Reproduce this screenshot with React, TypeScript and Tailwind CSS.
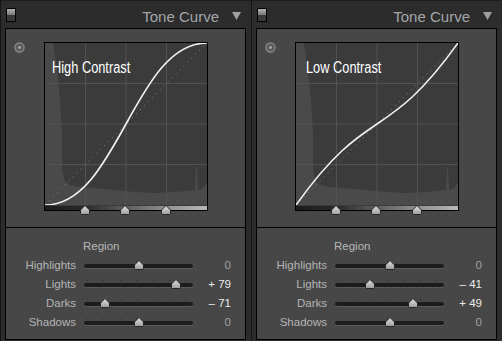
import React from "react";

type PanelProps = {
  label: string;
  labelLeft: number;
  curve: string;
  values: number[];
};

const Thumb = () => (
  <svg width="10" height="10" viewBox="0 0 10 10">
    <defs>
      <linearGradient id="tg" x1="0" y1="0" x2="0" y2="1">
        <stop offset="0" stopColor="#e2e2e2" />
        <stop offset="1" stopColor="#9c9c9c" />
      </linearGradient>
    </defs>
    <path d="M5 0.5 L9.5 5 L9.5 8.3 Q9.5 9.5 8.3 9.5 L1.7 9.5 Q0.5 9.5 0.5 8.3 L0.5 5 Z" fill="url(#tg)" stroke="#262626" strokeWidth="1" />
  </svg>
);

const Slider = ({ value }: { value: number }) => {
  const ticks = [3, 19, 36, 52, 69, 85, 101];
  const left = 54.5 + value * 0.475 - 5;
  return (
    <div className="relative ml-[8px] flex h-[19px] w-[109px] items-center">
      <div className="h-[4px] w-full rounded-full bg-[#1c1c1c] shadow-[0_1px_0_#5c5c5c]" />
      {ticks.map((t) => (
        <div key={t} className="absolute top-[5px] h-px w-px bg-[#2c2c2c]" style={{ left: t }} />
      ))}
      <div className="absolute top-[4px]" style={{ left }}>
        <Thumb />
      </div>
    </div>
  );
};

const rows = ["Highlights", "Lights", "Darks", "Shadows"];

const fmt = (v: number) => (v === 0 ? "0" : v > 0 ? `+ ${v}` : `– ${Math.abs(v)}`);

const hist =
  "0,0 8,0 12,27 15,57 17,90 17,125 19,137 24,142 35,144 60,146 90,149 110,150 130,149 150,147 151,124 152,124 153,147 158,145 162,140 162,162 0,162";

const Panel = ({ label, labelLeft, curve, values }: PanelProps) => (
  <div className="flex h-[341px] w-[251px] shrink-0 flex-col border-l border-[#161616] bg-[#2c2c2c]">
    <div className="flex h-[28px] items-center border-t border-[#1e1e1e] pt-[3px]">
      <div className="ml-[5px] mb-[3px] flex h-[14px] w-[10px] flex-col overflow-hidden border border-black">
        <div className="h-1/2 bg-gradient-to-b from-[#b0b0b0] to-[#7a7a7a]" />
        <div className="h-1/2 bg-[#3a3a3a]" />
      </div>
      <div className="flex-1" />
      <span className="text-[15px] leading-[15px] text-[#a2a6aa]">Tone Curve</span>
      <svg width="9" height="8" viewBox="0 0 9 8" className="ml-[13px] mr-[10px]">
        <polygon points="0,0 9,0 4.5,8" fill="#a0a0a0" />
      </svg>
    </div>
    <div className="ml-[4px] flex h-[312px] w-[241px] flex-col border border-black bg-[#474747]">
      <div className="flex h-[199px] border-b border-black pt-[13px]">
        <div className="w-[38px] pl-[8px]">
          <svg width="11" height="11" viewBox="0 0 11 11">
            <circle cx="5.5" cy="5.5" r="4.6" fill="#5a5a5a" stroke="#8e8e8e" strokeWidth="1.2" />
            <circle cx="5.5" cy="5.5" r="1.4" fill="#a8a8a8" />
          </svg>
        </div>
        <div className="relative flex h-[169px] w-[164px] flex-col border border-black bg-[#3b3b3b]">
          <svg width="162" height="162" viewBox="0 0 162 162" className="block">
            <polygon points={hist} fill="#4a4a4a" />
            {[40.5, 81, 121.5].map((p) => (
              <g key={p}>
                <line x1={p} y1="0" x2={p} y2="162" stroke="#525252" strokeWidth="1" />
                <line x1="0" y1={p} x2="162" y2={p} stroke="#525252" strokeWidth="1" />
              </g>
            ))}
            <line x1="0" y1="162" x2="162" y2="0" stroke="#8a8a8a" strokeWidth="1" strokeDasharray="1 4.6" />
            <path d={curve} fill="none" stroke="#f2f2f2" strokeWidth="1.6" />
          </svg>
          <div className="mt-px h-[4px] w-full bg-[linear-gradient(to_right,#1c1c1c_0%,#2a2a2a_25%,#5e5e5e_50%,#909090_75%,#b8b8b8_100%)]" />
          <div className="absolute left-[35px] top-[162px]"><Thumb /></div>
          <div className="absolute left-[75px] top-[162px]"><Thumb /></div>
          <div className="absolute left-[116px] top-[162px]"><Thumb /></div>
          <div
            className="absolute top-[17px] origin-left scale-x-[0.8] whitespace-nowrap text-[16px] leading-[16px] text-white"
            style={{ left: labelLeft }}
          >
            {label}
          </div>
        </div>
      </div>
      <div className="flex flex-col pt-[10px] text-[11.5px]">
        <div className="pl-[77px] leading-[16px] text-[#b8b8b8]">Region</div>
        <div className="mt-[2px] flex flex-col">
          {rows.map((r, i) => (
            <div key={r} className="flex h-[19px] items-center">
              <div className="w-[70px] text-right text-[#b4b4b4]">{r}</div>
              <Slider value={values[i]} />
              <div className={`w-[38px] text-right ${values[i] === 0 ? "text-[#a0a0a0]" : "text-[#ececec]"}`}>
                {fmt(values[i])}
              </div>
            </div>
          ))}
        </div>
      </div>
    </div>
  </div>
);

export default function App() {
  return (
    <div className="flex h-[341px] w-[502px] overflow-hidden bg-[#2c2c2c] font-['Liberation_Sans',Arial,sans-serif]">
      <Panel label="High Contrast" labelLeft={7} curve="M0 162 C72.9 162, 89.1 0, 162 0" values={[0, 79, -71, 0]} />
      <Panel label="Low Contrast" labelLeft={10} curve="M0 162 C72.9 59.9, 89.1 102.1, 162 0" values={[0, -41, 49, 0]} />
    </div>
  );
}
